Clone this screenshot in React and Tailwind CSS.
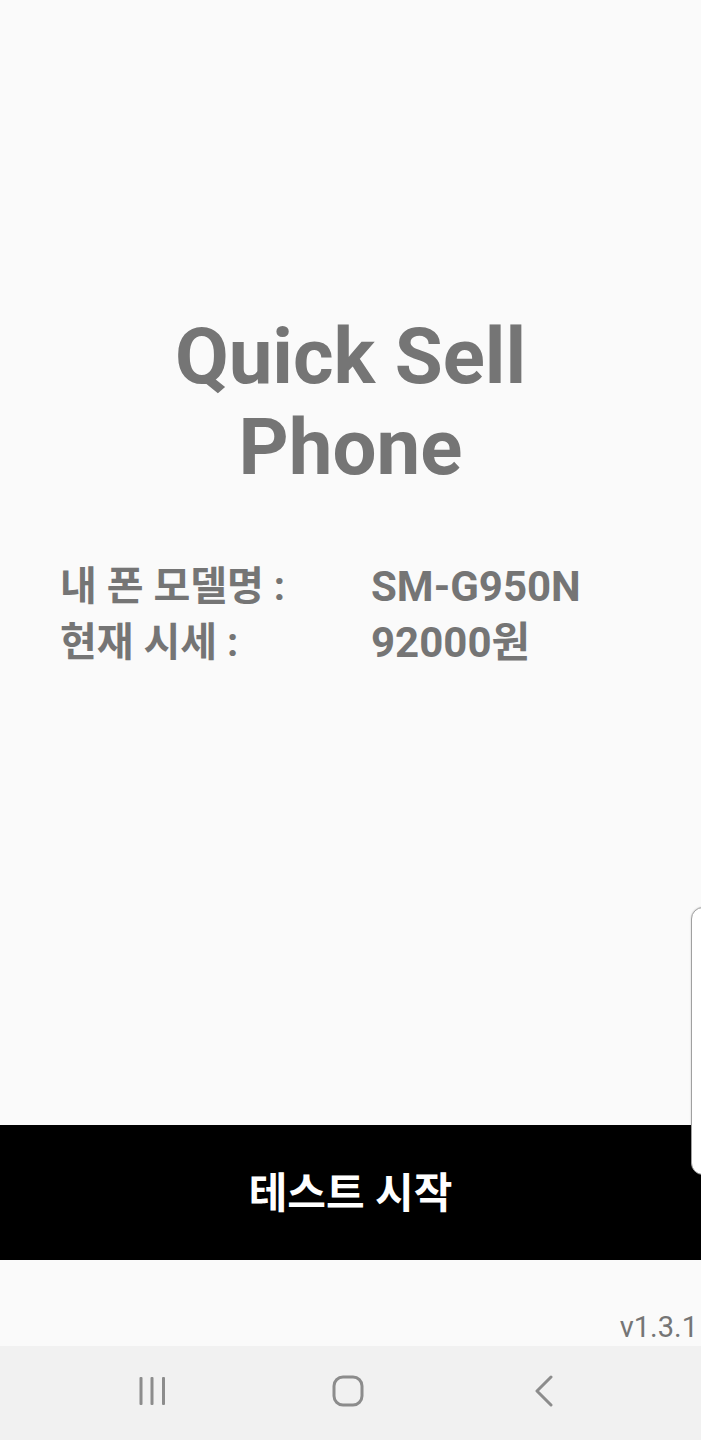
export default function App() {
  return (
    <div className="relative w-[701px] h-[1440px] flex flex-col bg-[#fafafa] overflow-hidden font-['Roboto','Noto_Sans_CJK_KR',sans-serif] text-[#757575]">
      <main className="flex-1 flex flex-col pt-[311px]">
        <h1 className="text-center font-bold text-[78px] leading-[91px]">
          <div>Quick Sell</div>
          <div>Phone</div>
        </h1>
        <div className="mt-[66px] pl-[60px] font-bold">
          <div className="flex h-[56px]">
            <div className="w-[311px] text-[40px] leading-[56px]">내 폰 모델명 :</div>
            <div className="text-[42px] leading-[56px]">SM-G950N</div>
          </div>
          <div className="flex h-[56px]">
            <div className="w-[311px] text-[40px] leading-[56px]">현재 시세 :</div>
            <div className="text-[42px] leading-[56px]">92000원</div>
          </div>
        </div>
      </main>
      <button className="h-[135px] w-full bg-black text-white font-bold text-[42px] leading-[50px] flex items-center justify-center pt-[2px]">
        테스트 시작
      </button>
      <div className="h-[86px] flex items-end justify-end pr-[3px] pb-[4px]">
        <span className="text-[29px] leading-[30px] font-normal">v1.3.1</span>
      </div>
      <nav className="h-[94px] bg-[#f1f1f1] flex items-center justify-center gap-[136px] pr-[5px] pb-[4px]">
        <div className="w-[60px] flex justify-center">
          <svg width="30" height="30" viewBox="0 0 30 30">
            <rect x="2.5" y="1" width="3" height="28" rx="1" fill="#8c8c8c" />
            <rect x="13.5" y="1" width="3" height="28" rx="1" fill="#8c8c8c" />
            <rect x="25" y="1" width="3" height="28" rx="1" fill="#8c8c8c" />
          </svg>
        </div>
        <div className="w-[60px] flex justify-center">
          <svg width="32" height="32" viewBox="0 0 32 32">
            <rect x="2" y="2" width="28" height="28" rx="9" fill="none" stroke="#8c8c8c" strokeWidth="3" />
          </svg>
        </div>
        <div className="w-[60px] flex justify-center">
          <svg width="22" height="32" viewBox="0 0 22 32">
            <path d="M18 2 L4 16 L18 30" fill="none" stroke="#8c8c8c" strokeWidth="3" strokeLinecap="round" strokeLinejoin="round" />
          </svg>
        </div>
      </nav>
      <div className="absolute top-[907px] left-[691px] w-[24px] h-[268px] bg-white border border-[#a0a0a0] rounded-l-[12px] shadow-[0_0_2px_rgba(0,0,0,0.2)]" />
    </div>
  );
}
